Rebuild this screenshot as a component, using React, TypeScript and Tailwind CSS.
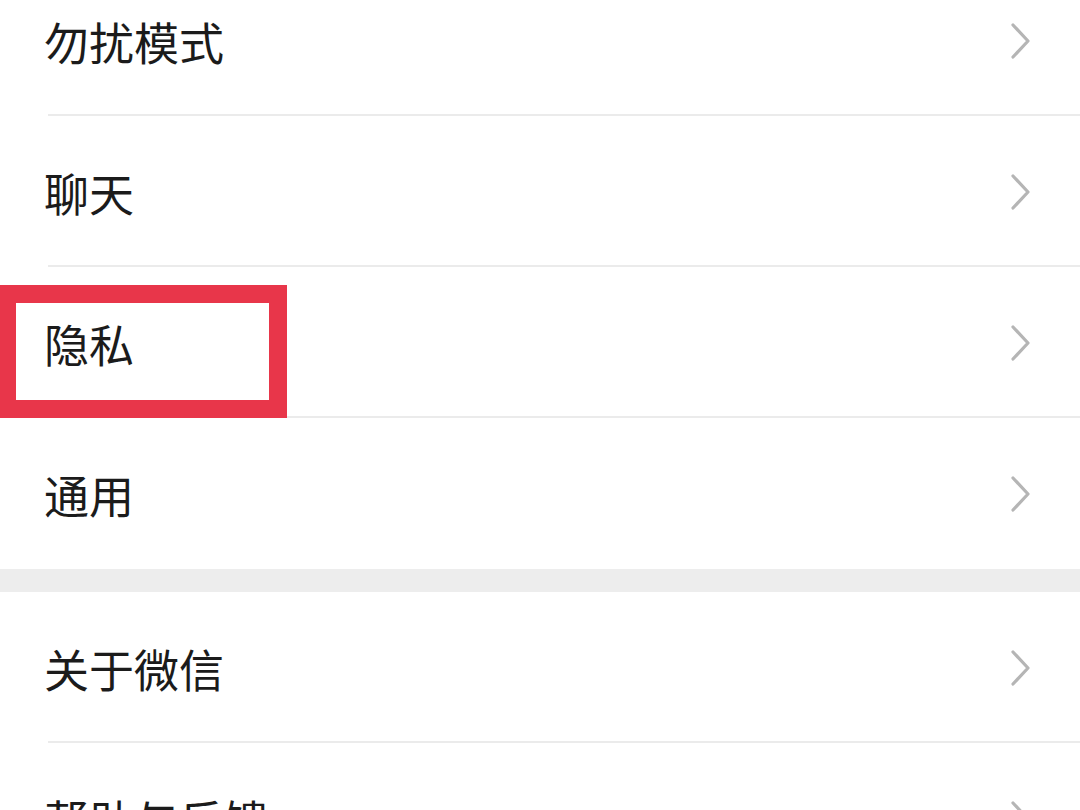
import React from "react";

const section1 = ["勿扰模式", "聊天", "隐私", "通用"];
const section2 = ["关于微信", "帮助与反馈"];

function Chevron() {
  return (
    <svg width="22" height="36" viewBox="0 0 22 36" className="shrink-0">
      <polyline points="3,2 18,18 3,34" fill="none" stroke="#b5b5b5" strokeWidth="3.2" strokeLinecap="round" strokeLinejoin="round" />
    </svg>
  );
}

function Row({ label, last }: { label: string; last?: boolean }) {
  return (
    <div className="relative h-[151px] bg-white flex items-center pl-[44px] pr-[48px]">
      <span className="flex-1 text-[45px] leading-none text-[#1b1b1b] pt-[1px]">{label}</span>
      <Chevron />
      {!last && <div className="absolute left-[48px] right-0 bottom-0 h-[2px] bg-[#ebebeb]" />}
    </div>
  );
}

export default function App() {
  return (
    <div
      className="relative w-[1080px] h-[810px] overflow-hidden bg-white"
      style={{ fontFamily: '"Noto Sans CJK SC", "Noto Sans", sans-serif' }}
    >
      <div className="-mt-[35px]">
        {section1.map((l, i) => (
          <Row key={l} label={l} last={i === section1.length - 1} />
        ))}
        <div className="h-[23px] bg-[#ededed]" />
        {section2.map((l) => (
          <Row key={l} label={l} />
        ))}
      </div>
      {/* 红框标注 */}
      <div className="absolute left-[-2px] top-[285px] w-[289px] h-[133px] border-[18px] border-[#e8364a]" />
    </div>
  );
}
